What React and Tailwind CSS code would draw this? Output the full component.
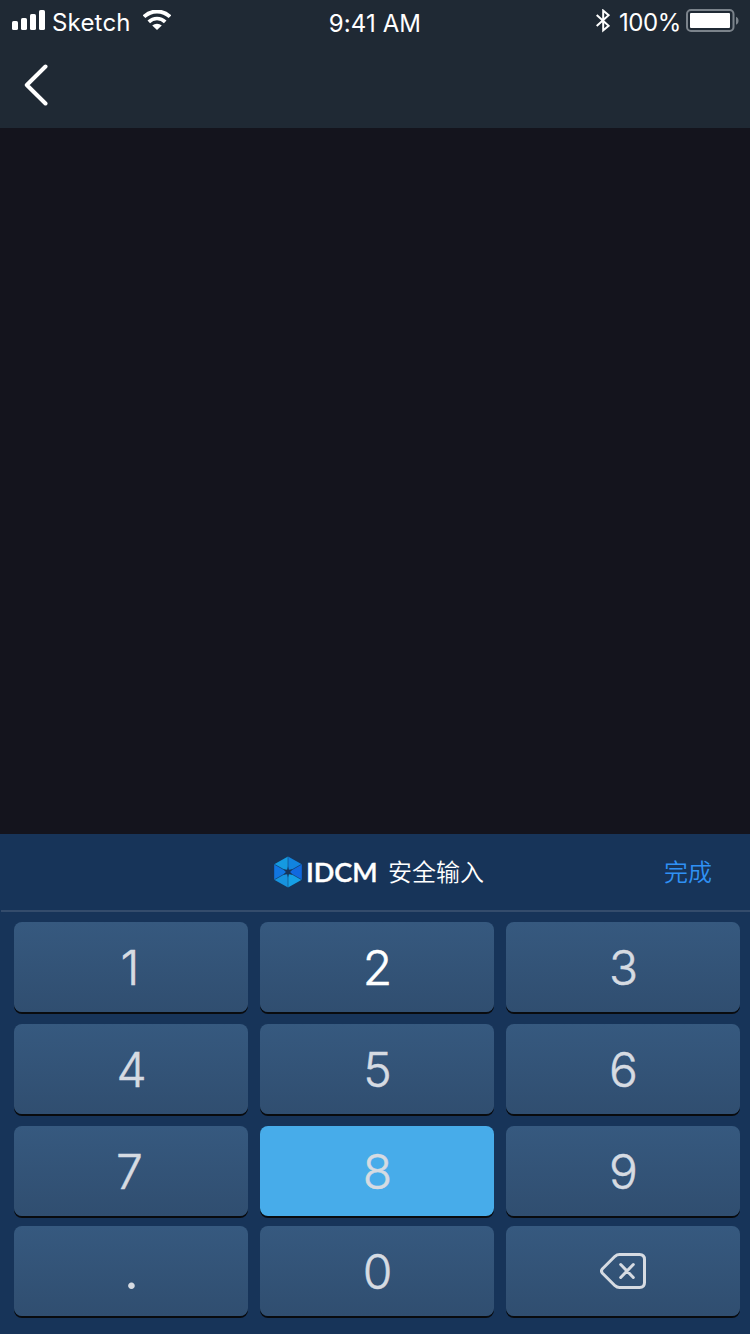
const KEYS = ["1", "2", "3", "4", "5", "6", "7", "8", "9", ".", "0", "delete"];

function Signal() {
  return (
    <svg className="ml-3 h-5 w-[33px] shrink-0" viewBox="0 0 33 20" fill="#fff">
      <rect x="0" y="11" width="6" height="9" rx="1.6" />
      <rect x="9" y="8" width="6" height="12" rx="1.6" />
      <rect x="18" y="4" width="6" height="16" rx="1.6" />
      <rect x="27" y="0" width="6" height="20" rx="1.6" />
    </svg>
  );
}

function Wifi() {
  return (
    <svg className="h-5 w-[28px] shrink-0" viewBox="0 0 28 20" fill="none">
      <path d="M1 6.7A18.8 18.8 0 0 1 27 6.7" stroke="#fff" strokeWidth="3.9" />
      <path d="M5.8 11.8A11.9 11.9 0 0 1 22.2 11.8" stroke="#fff" strokeWidth="3.7" />
      <path d="M14 20L9.2 15.6A7.2 7.2 0 0 1 18.8 15.6Z" fill="#fff" />
    </svg>
  );
}

function Bluetooth() {
  return (
    <svg className="h-6 w-[14px] shrink-0" viewBox="0 0 14 24" fill="none" stroke="#fff" strokeWidth="2">
      <path d="M.7 6L12.6 16.8L7.2 21.4V1.6L12.6 6.2L.7 17" />
    </svg>
  );
}

function Battery() {
  return (
    <svg className="h-6 w-[54px] shrink-0" viewBox="0 0 54 24" fill="none">
      <rect x="1" y="1" width="46.5" height="21" rx="4" stroke="#7b838b" strokeWidth="2" />
      <rect x="4" y="4" width="40" height="15" rx="1" fill="#fff" />
      <path d="M50 7.7C53.4 9 53.4 14.4 50 15.7Z" fill="#7b838b" />
    </svg>
  );
}

function Logo() {
  return (
    <svg className="h-8 w-7 shrink-0" viewBox="0 0 28 32">
      <path d="M14 .5L27.8 8.2L14 16Z" fill="#1183df" />
      <path d="M14 .5L.2 8.2L14 16Z" fill="#159ae1" />
      <path d="M.2 8.2V23.8L14 16Z" fill="#1176e2" />
      <path d="M27.8 8.2V23.8L14 16Z" fill="#1169df" />
      <path d="M.2 23.8L14 31.5V16Z" fill="#1793df" />
      <path d="M27.8 23.8L14 31.5V16Z" fill="#16a0e6" />
      <path d="M.5 8.3L27.5 23.7M27.5 8.3L.5 23.7M14 .5V31.5" stroke="#173459" strokeWidth=".5" />
      <path d="M14 10.5L14.8 13.7L18.6 13.2L16.1 16L18.6 18.8L14.8 18.3L14 21.5L13.2 18.3L9.4 18.8L11.9 16L9.4 13.2L13.2 13.7Z" fill="#173459" />
    </svg>
  );
}

function DeleteIcon() {
  return (
    <svg className="h-9 w-[46px]" viewBox="0 0 46 36" fill="none" stroke="#d6dbe2" strokeWidth="3" strokeLinecap="round" strokeLinejoin="round">
      <path d="M19.5 1.5H39.5Q44.5 1.5 44.5 6.5V29.5Q44.5 34.5 39.5 34.5H19.5Q17 34.5 15 32.7L2.5 20.2Q.5 18 2.5 15.8L15 3.3Q17 1.5 19.5 1.5Z" />
      <path d="M20.7 11.5L33.3 24.5M33.3 11.5L20.7 24.5" strokeWidth="3" />
    </svg>
  );
}

function Key({ value }) {
  const bg = value === "8" ? "bg-[#47acea]" : "bg-linear-to-b from-[#36597f] to-[#304e70]";
  const color = value === "2" ? "text-white" : "text-[#d6dbe2]";
  const nudge = value === "1" ? "pr-0.5" : value === "7" ? "pr-[3px]" : value === "delete" ? "pr-px" : "pl-px";
  const size = value === "." ? "text-[50px] font-normal" : "pt-px text-[48px] font-light [-webkit-text-stroke:0.5px_currentColor]";
  return (
    <button className={`flex h-[90px] items-center justify-center rounded-lg shadow-[0_2px_0_#090b0e] ${bg} ${color} ${nudge}`}>
      {value === "delete" ? <DeleteIcon /> : <span className={`leading-[88px] ${size}`}>{value}</span>}
    </button>
  );
}

export default function App() {
  return (
    <div className="flex h-[1334px] w-[750px] flex-col overflow-hidden bg-[#14141d] font-['Inter','Noto_Sans_CJK_SC',sans-serif] text-white">
      <header className="h-32 shrink-0 bg-[#1f2934]">
        <div className="grid h-10 grid-cols-3 text-2xl">
          <div className="flex items-start pt-[10px]">
            <Signal />
            <span className="ml-[7px] w-[91px] pt-px text-[24px] leading-6 tracking-[0.2px]">Sketch</span>
            <Wifi />
          </div>
          <div className="pt-3 text-center leading-6 tracking-[0.1px]">9:41 AM</div>
          <div className="flex items-start justify-end pt-[9px] pr-[10px]">
            <Bluetooth />
            <span className="ml-[9px] w-[67px] pt-[2px] leading-6 tracking-[-0.4px]">100%</span>
            <Battery />
          </div>
        </div>
        <svg className="mt-6 ml-6 h-[42px] w-6" viewBox="0 0 24 42" fill="none" stroke="#fff" strokeWidth="4" strokeLinecap="round" strokeLinejoin="round">
          <path d="M21.5 2.5L2.8 21L21.5 39.5" />
        </svg>
      </header>

      <main className="flex-1" />

      <section className="h-[500px] shrink-0 bg-[#173459]">
        <div className="ml-px flex h-[78px] items-center justify-between border-b-2 border-[#344c6c] pr-[38px]">
          <div className="w-[48px]" />
          <div className="ml-[225px] flex flex-1 items-center">
            <Logo />
            <span className="ml-1 w-[82px] font-['Lato'] text-[26px] leading-8 font-semibold [-webkit-text-stroke:0.4px_currentColor]">
              <span className="inline-block origin-left scale-x-[1.04]">IDCM</span>
            </span>
            <span className="pb-0.5 font-['Noto_Sans_CJK_SC'] text-2xl leading-8 font-[350]">安全输入</span>
          </div>
          <button className="pb-0.5 font-['Noto_Sans_CJK_SC'] text-2xl leading-8 font-[350] text-[#2f91f5]">完成</button>
        </div>
        <div className="grid grid-cols-3 grid-rows-[102px_102px_100px_90px] gap-x-3 pt-[10px] pr-[10px] pl-[14px]">
          {KEYS.map((value) => (
            <Key key={value} value={value} />
          ))}
        </div>
      </section>
    </div>
  );
}
